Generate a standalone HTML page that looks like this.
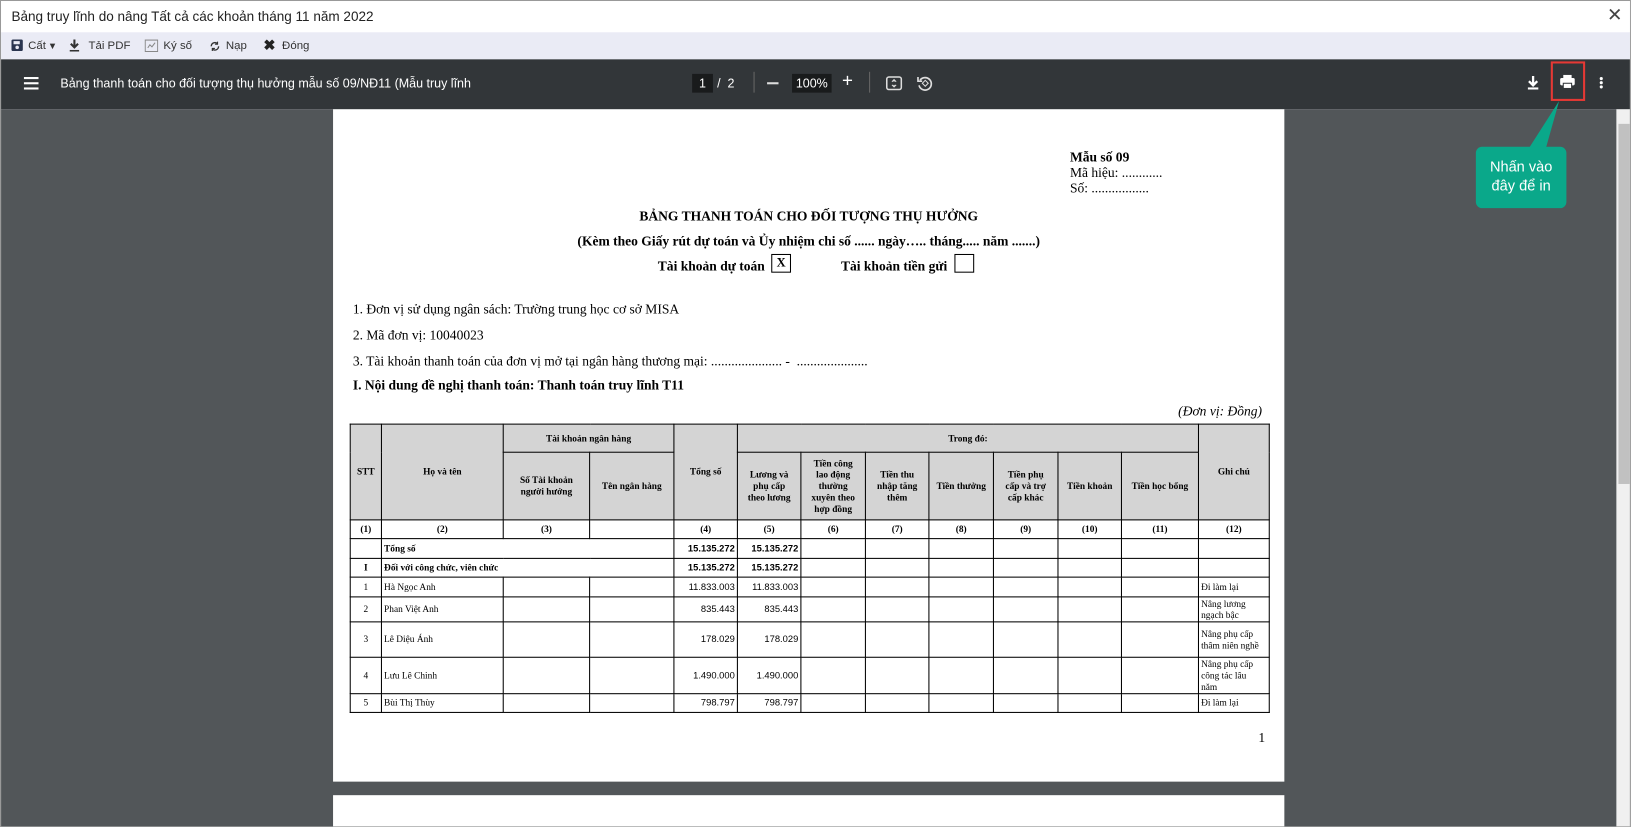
<!DOCTYPE html>
<html><head><meta charset="utf-8"><style>
*{margin:0;padding:0;box-sizing:border-box}
body{width:1631px;height:827px;background:#fff;position:relative;overflow:hidden;font-family:"Liberation Sans",sans-serif}
.wrap{position:absolute;left:0;top:0;width:1567px;height:795px;transform:scale(1.0408);transform-origin:0 0}
.abs{position:absolute}
.win{left:0;top:0;width:1567px;height:795px;border:1px solid #999;overflow:hidden}
.title{left:0;top:0;width:1567px;height:30px;background:#fff;font-size:13px;color:#222;padding:7px 10px}
.tb{left:0;top:30px;width:1567px;height:26px;background:#eaebf5;font-size:11px;color:#333}
.tb span{position:absolute;top:7px}
.dark{left:0;top:56px;width:1567px;height:48px;background:#323639;color:#fff;font-size:12px}
.body{left:0;top:104px;width:1567px;height:691px;background:#525659}
.page{background:#fff;left:319px;top:104px;width:914px;height:646px}
.page2{background:#fff;left:319px;top:763px;width:914px;height:40px}
.ser{font-family:"Liberation Serif",serif;color:#000}
table{border-collapse:collapse;position:absolute;left:335px;top:406px;font-family:"Liberation Serif",serif;font-size:9px;table-layout:fixed}
td{border:1px solid #000;text-align:center;vertical-align:middle;line-height:11px;padding:0 2px}
.h td{background:#d4d4d4;font-weight:bold}
.b{font-weight:bold}
.l{text-align:left}.r{text-align:right;font-family:"Liberation Sans",sans-serif}
</style></head><body><div class="wrap">
<div class="abs win">
<div class="abs title">Bảng truy lĩnh do nâng Tất cả các khoản tháng 11 năm 2022<span style="position:absolute;left:1543px;top:3px;font-size:18px;color:#444">✕</span></div>
<div class="abs tb">
<svg class="abs" style="left:10px;top:7px" width="11" height="11"><rect x="0" y="0" width="11" height="11" rx="1.5" fill="#2a3550"/><rect x="2" y="1.5" width="6" height="3" fill="#eaebf5"/><circle cx="5.5" cy="7.5" r="1.7" fill="#eaebf5"/></svg>
<span style="left:26px">Cất</span><span style="left:45px;font-size:9px;top:8px">▼</span>
<svg class="abs" style="left:65px;top:6px" width="11" height="13"><path d="M5.5 1v7M2 5l3.5 3.5L9 5" stroke="#333" stroke-width="2" fill="none"/><rect x="1" y="11" width="9" height="1.5" fill="#333"/></svg>
<span style="left:84px">Tải PDF</span>
<svg class="abs" style="left:138px;top:7px" width="13" height="12"><rect x="0.5" y="0.5" width="12" height="11" fill="none" stroke="#888"/><path d="M3 8l2-3 2 2 3-4" stroke="#888" fill="none"/></svg>
<span style="left:156px">Ký số</span>
<svg class="abs" style="left:200px;top:8px" width="11" height="11"><path d="M2 5.5a3.5 3.5 0 0 1 6-2.5M9 5.5a3.5 3.5 0 0 1-6 2.5" stroke="#333" stroke-width="1.3" fill="none"/><path d="M8 1v2.5H5.5M3 10V7.5h2.5" stroke="#333" stroke-width="1.1" fill="none"/></svg>
<span style="left:216px">Nạp</span>
<span style="left:252px;font-weight:bold;font-size:14px;top:4px;color:#222">✖</span><span style="left:270px">Đóng</span>
</div>
<div class="abs dark">
<div class="abs" style="left:22px;top:17px;width:14px;height:2px;background:#fff;box-shadow:0 5px 0 #fff,0 10px 0 #fff"></div>
<div class="abs" style="left:57px;top:16px">Bảng thanh toán cho đối tượng thụ hưởng mẫu số 09/NĐ11 (Mẫu truy lĩnh</div>
<div class="abs" style="left:664px;top:14px;width:20px;height:18px;background:#191b1c;text-align:center;padding-top:2px">1</div>
<div class="abs" style="left:688px;top:16px">/ &nbsp;2</div>
<div class="abs" style="left:723px;top:12px;width:1px;height:20px;background:#666"></div>
<div class="abs" style="left:736px;top:22px;width:11px;height:2px;background:#ddd"></div>
<div class="abs" style="left:760px;top:14px;width:38px;height:18px;background:#191b1c;text-align:center;padding-top:2px">100%</div>
<div class="abs" style="left:808px;top:10px;font-size:18px">+</div>
<div class="abs" style="left:834px;top:12px;width:1px;height:20px;background:#666"></div>
<svg class="abs" style="left:850px;top:16px" width="16" height="14"><rect x="1" y="1" width="14" height="12" rx="2" fill="none" stroke="#ddd" stroke-width="1.5"/><path d="M8 3.5v2M8 8.5v2M6 5.5l2-2 2 2M6 8.5l2 2 2-2" stroke="#ddd" fill="none"/></svg>
<svg class="abs" style="left:879px;top:15px" width="16" height="16"><path d="M4 5a6 6 0 1 1-1 5" stroke="#ddd" stroke-width="1.6" fill="none"/><path d="M2 2v4h4" stroke="#ddd" stroke-width="1.6" fill="none"/><rect x="7" y="6" width="4" height="4" transform="rotate(45 9 8)" fill="none" stroke="#ddd"/></svg>
<svg class="abs" style="left:1466px;top:15px" width="12" height="15"><path d="M6 1v8M2 6l4 4 4-4" stroke="#fff" stroke-width="2.2" fill="none"/><rect x="1" y="12" width="10" height="2" fill="#fff"/></svg>
<div class="abs" style="left:1489px;top:2px;width:33px;height:38px;border:2px solid #e53935"></div>
<svg class="abs" style="left:1497px;top:14px" width="16" height="15"><rect x="4" y="1" width="8" height="3" fill="#fff"/><rect x="1" y="4" width="14" height="7" rx="1.5" fill="#fff"/><rect x="4" y="9" width="8" height="5" fill="#fff" stroke="#323639"/></svg>
<div class="abs" style="left:1536px;top:17px;width:3px;height:3px;background:#fff;border-radius:50%;box-shadow:0 4px 0 #fff,0 8px 0 #fff"></div>
</div>
<div class="abs body"></div>
<div class="abs" style="left:1552px;top:104px;width:15px;height:691px;background:#f0f0f0"></div>
<div class="abs" style="left:1554px;top:118px;width:11px;height:346px;background:#c1c1c1"></div>
<div class="abs page"></div>
<div class="abs page2"></div>
<svg class="abs" style="left:1455px;top:96px" width="60" height="60"><polygon points="42,0 28,50 10,50" fill="#0aa88a"/></svg>
<div class="abs" style="left:1417px;top:140px;width:87px;height:59px;background:#0aa88a;border-radius:6px;color:#fff;font-size:14px;text-align:center;padding-top:10px;line-height:18px">Nhấn vào<br>đây để in</div>

<div class="abs ser" style="left:1027px;top:142px;font-size:13px;line-height:15px"><b>Mẫu số 09</b><br>Mã hiệu: ............<br>Số: .................</div>
<div class="abs ser b" style="left:319px;width:914px;text-align:center;top:199px;font-size:13px">BẢNG THANH TOÁN CHO ĐỐI TƯỢNG THỤ HƯỞNG</div>
<div class="abs ser b" style="left:319px;width:914px;text-align:center;top:223px;font-size:13px">(Kèm theo Giấy rút dự toán và Ủy nhiệm chi số ...... ngày….. tháng..... năm .......)</div>
<div class="abs ser b" style="left:631px;top:247px;font-size:13px">Tài khoản dự toán</div>
<div class="abs ser b" style="left:740px;top:243px;width:19px;height:18px;border:1px solid #000;text-align:center;font-size:12px">X</div>
<div class="abs ser b" style="left:807px;top:247px;font-size:13px">Tài khoản tiền gửi</div>
<div class="abs" style="left:916px;top:243px;width:19px;height:18px;border:1px solid #000"></div>
<div class="abs ser" style="left:338px;top:288px;font-size:13px">1. Đơn vị sử dụng ngân sách: Trường trung học cơ sở MISA</div>
<div class="abs ser" style="left:338px;top:313px;font-size:13px">2. Mã đơn vị: 10040023</div>
<div class="abs ser" style="left:338px;top:338px;font-size:13px">3. Tài khoản thanh toán của đơn vị mở tại ngân hàng thương mại: ..................... - &nbsp;.....................</div>
<div class="abs ser b" style="left:338px;top:361px;font-size:13px">I. Nội dung đề nghị thanh toán: Thanh toán truy lĩnh T11</div>
<div class="abs ser" style="left:1131px;top:386px;font-size:13px;font-style:italic">(Đơn vị: Đồng)</div>
<table>
<colgroup><col style="width:30px"><col style="width:117px"><col style="width:83px"><col style="width:81px"><col style="width:61px"><col style="width:61px"><col style="width:62px"><col style="width:61px"><col style="width:62px"><col style="width:62px"><col style="width:61px"><col style="width:74px"><col style="width:68px"></colgroup>
<tr class="h" style="height:27px"><td rowspan="2">STT</td><td rowspan="2">Họ và tên</td><td colspan="2">Tài khoản ngân hàng</td><td rowspan="2">Tổng số</td><td colspan="7">Trong đó:</td><td rowspan="2">Ghi chú</td></tr>
<tr class="h" style="height:65px"><td style="padding:0 8px">Số Tài khoản người hưởng</td><td>Tên ngân hàng</td><td style="padding:0 6px">Lương và phụ cấp theo lương</td><td style="padding:0 6px">Tiền công lao động thường xuyên theo hợp đồng</td><td style="padding:0 8px">Tiền thu nhập tăng thêm</td><td>Tiền thưởng</td><td style="padding:0 6px">Tiền phụ cấp và trợ cấp khác</td><td>Tiền khoản</td><td>Tiền học bổng</td></tr>
<tr class="b" style="height:18px"><td>(1)</td><td>(2)</td><td>(3)</td><td></td><td>(4)</td><td>(5)</td><td>(6)</td><td>(7)</td><td>(8)</td><td>(9)</td><td>(10)</td><td>(11)</td><td>(12)</td></tr>
<tr style="height:19px" class="b"><td></td><td colspan="3" class="l">Tổng số</td><td class="r">15.135.272</td><td class="r">15.135.272</td><td></td><td></td><td></td><td></td><td></td><td></td><td></td></tr>
<tr style="height:18px" class="b"><td>I</td><td colspan="3" class="l">Đối với công chức, viên chức</td><td class="r">15.135.272</td><td class="r">15.135.272</td><td></td><td></td><td></td><td></td><td></td><td></td><td></td></tr>
<tr style="height:19px"><td>1</td><td class="l">Hà Ngọc Anh</td><td></td><td></td><td class="r">11.833.003</td><td class="r">11.833.003</td><td></td><td></td><td></td><td></td><td></td><td></td><td class="l">Đi làm lại</td></tr>
<tr style="height:24px"><td>2</td><td class="l">Phan Việt Anh</td><td></td><td></td><td class="r">835.443</td><td class="r">835.443</td><td></td><td></td><td></td><td></td><td></td><td></td><td class="l" style="padding-right:8px">Nâng lương ngạch bậc</td></tr>
<tr style="height:34px"><td>3</td><td class="l">Lê Diệu Ánh</td><td></td><td></td><td class="r">178.029</td><td class="r">178.029</td><td></td><td></td><td></td><td></td><td></td><td></td><td class="l">Nâng phụ cấp thâm niên nghề</td></tr>
<tr style="height:35px"><td>4</td><td class="l">Lưu Lê Chinh</td><td></td><td></td><td class="r">1.490.000</td><td class="r">1.490.000</td><td></td><td></td><td></td><td></td><td></td><td></td><td class="l" style="padding-right:10px">Nâng phụ cấp công tác lâu năm</td></tr>
<tr style="height:18px"><td>5</td><td class="l">Bùi Thị Thùy</td><td></td><td></td><td class="r">798.797</td><td class="r">798.797</td><td></td><td></td><td></td><td></td><td></td><td></td><td class="l">Đi làm lại</td></tr>
</table>
<div class="abs ser" style="left:1208px;top:700px;font-size:13px">1</div>
</div>
</div></body></html>
